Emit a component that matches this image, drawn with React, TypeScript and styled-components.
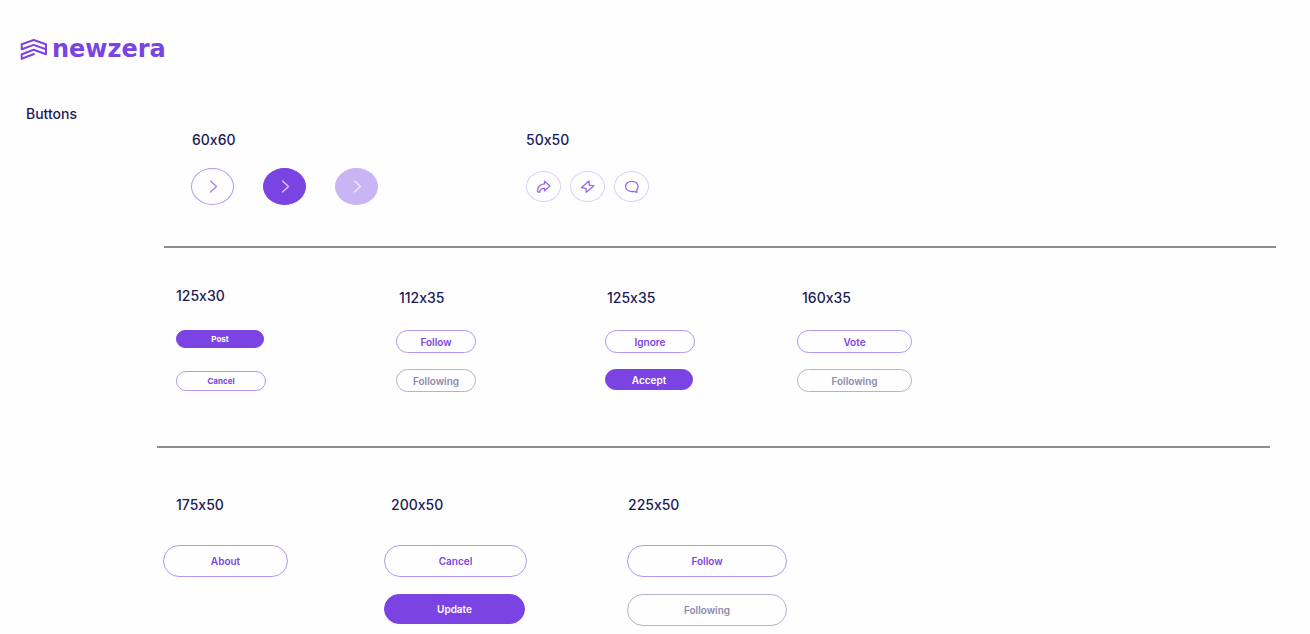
import React from "react";
import styled, { createGlobalStyle, css } from "styled-components";

const color = {
  purple: "#7b44e2",
  outline: "#b497f0",
  pale: "#c9b5f3",
  faint: "#dccffa",
  navy: "#1c1a56",
  mutedText: "#8c8aac",
  mutedLine: "#b5b2cd",
  rule: "#8e8e8e",
};

const GlobalStyle = createGlobalStyle`
  *, *::before, *::after { box-sizing: border-box; }
  body {
    margin: 0;
    background: #fefefe;
    color: ${color.navy};
    font-family: Inter, "Liberation Sans", sans-serif;
    font-feature-settings: "calt" 0;
  }
`;

const Page = styled.main`
  padding-bottom: 8px;
`;

const Header = styled.header`
  display: flex;
  padding: 34px 20px 0;
`;

const Brand = styled.a`
  display: flex;
  align-items: center;
  gap: 4px;
  height: 30px;
  color: ${color.purple};
  text-decoration: none;
`;

const Wordmark = styled.span`
  font-family: "DejaVu Sans", sans-serif;
  font-size: 24px;
  font-weight: 700;
  line-height: 28px;
`;

const Title = styled.h1`
  margin: 40px 26px 0;
  font-size: 14px;
  font-weight: 500;
  line-height: 20px;
`;

const Section = styled.section<{ $top: number; $left: number; $bottom: number }>`
  display: flex;
  align-items: flex-start;
  padding: ${(p) => `${p.$top}px 24px ${p.$bottom}px ${p.$left}px`};
`;

const Group = styled.div<{ $before?: number; $drop?: number }>`
  margin-left: ${(p) => p.$before ?? 0}px;
  padding-top: ${(p) => p.$drop ?? 0}px;
`;

const Label = styled.h2<{ $indent?: number }>`
  margin: 0;
  padding-left: ${(p) => p.$indent ?? 0}px;
  font-size: 14px;
  font-weight: 500;
  line-height: 20px;
`;

const Row = styled.div<{ $gap: number }>`
  display: flex;
  align-items: center;
  gap: ${(p) => p.$gap}px;
  height: 37px;
  margin-top: 18px;
`;

const Stack = styled.div<{ $top: number; $gap: number }>`
  display: flex;
  flex-direction: column;
  align-items: flex-start;
  gap: ${(p) => p.$gap}px;
  margin-top: ${(p) => p.$top}px;
`;

const Rule = styled.hr<{ $left: number; $right: number }>`
  height: 2px;
  margin: 0 ${(p) => p.$right}px 0 ${(p) => p.$left}px;
  border: 0;
  background: ${color.rule};
`;

type Tone = "outline" | "solid" | "muted" | "pale" | "faint";

const tones = {
  outline: css`
    border-color: ${color.outline};
    background: transparent;
    color: ${color.purple};
  `,
  solid: css`
    border-color: ${color.purple};
    background: ${color.purple};
    color: #fff;
  `,
  muted: css`
    border-color: ${color.mutedLine};
    background: transparent;
    color: ${color.mutedText};
  `,
  pale: css`
    border-color: ${color.pale};
    background: ${color.pale};
    color: #fff;
  `,
  faint: css`
    border-color: ${color.faint};
    background: transparent;
    color: #9468ea;
  `,
};

const ButtonBase = styled.button<{ $tone: Tone }>`
  display: flex;
  align-items: center;
  justify-content: center;
  padding: 0;
  border: 1px solid;
  font-family: inherit;
  cursor: pointer;
  ${(p) => tones[p.$tone]}
`;

const Pill = styled(ButtonBase)<{ $w: number; $h: number; $small?: boolean }>`
  width: ${(p) => p.$w}px;
  height: ${(p) => p.$h}px;
  border-radius: 16px;
  font-size: ${(p) => (p.$small ? 8 : 10)}px;
  font-weight: ${(p) => (p.$small ? 700 : 600)};
`;

const Round = styled(ButtonBase)<{ $small?: boolean }>`
  width: ${(p) => (p.$small ? 35 : 43)}px;
  height: ${(p) => (p.$small ? 31 : 37)}px;
  border-radius: 50%;
`;

const LogoMark = () => (
  <svg width="28" height="24" viewBox="0 0 28 24" fill="none" stroke="currentColor" strokeWidth="2" strokeLinejoin="round" strokeLinecap="round" aria-hidden="true">
    <path d="M14 17 1.700 21.800V17.300L13.700 12.800 26 17.300V7.300L13.700 3 1.700 7.300V12.300L13.700 7.900 26 12.300" />
  </svg>
);

const Chevron = ({ tint }: { tint: string }) => (
  <svg width="10" height="14" viewBox="0 0 10 14" fill="none" stroke={tint} strokeWidth="1.3" strokeLinecap="round" strokeLinejoin="round" aria-hidden="true">
    <path d="M2.500 1 8.500 6.500 2.500 12" />
  </svg>
);

const ShareIcon = () => (
  <svg width="16" height="14" viewBox="0 0 16 14" fill="none" stroke="currentColor" strokeWidth="1.3" strokeLinejoin="round" aria-hidden="true">
    <path d="M8.500 1.200 14 6 8.500 10.800V8.300C5.500 8.100 4 9.600 3.600 12.300L1.500 11.600C1.300 7 4.200 4 8.500 3.900Z" />
  </svg>
);

const BoltIcon = () => (
  <svg width="16" height="14" viewBox="0 0 16 14" fill="none" stroke="currentColor" strokeWidth="1.3" strokeLinejoin="round" aria-hidden="true">
    <path d="M9 1 1.500 7.600 6 8.300 6.200 12.300 14 5.800 9.300 5.200Z" />
  </svg>
);

const ChatIcon = () => (
  <svg width="16" height="14" viewBox="0 0 16 14" fill="none" stroke="currentColor" strokeWidth="1.3" strokeLinejoin="round" aria-hidden="true">
    <path d="M13 12.300 9.800 11.300C5.500 12.200 1.600 10 1.600 6.400 1.600 3.500 4.400 1.300 7.800 1.300S14.100 3.500 14.100 6.400C14.100 7.800 13.600 9 12.700 9.900Z" />
  </svg>
);

export default function App() {
  return (
    <>
      <GlobalStyle />
      <Page>
        <Header>
          <Brand href="#">
            <LogoMark />
            <Wordmark>newzera</Wordmark>
          </Brand>
        </Header>
        <Title>Buttons</Title>

        <Section $top={6} $left={191} $bottom={41}>
          <Group>
            <Label $indent={1}>60x60</Label>
            <Row $gap={29}>
              <Round $tone="outline" aria-label="Next"><Chevron tint="#a57fee" /></Round>
              <Round $tone="solid" aria-label="Next, active"><Chevron tint="#d9caf8" /></Round>
              <Round $tone="pale" aria-label="Next, inactive"><Chevron tint="#efe8fc" /></Round>
            </Row>
          </Group>
          <Group $before={148}>
            <Label>50x50</Label>
            <Row $gap={9}>
              <Round $small $tone="faint" aria-label="Share"><ShareIcon /></Round>
              <Round $small $tone="faint" aria-label="Boost"><BoltIcon /></Round>
              <Round $small $tone="faint" aria-label="Comment"><ChatIcon /></Round>
            </Row>
          </Group>
        </Section>

        <Rule $left={164} $right={34} />

        <Section $top={38} $left={176} $bottom={54}>
          <Group>
            <Label>125x30</Label>
            <Stack $top={24} $gap={23}>
              <Pill $tone="solid" $w={88} $h={18} $small>Post</Pill>
              <Pill $tone="outline" $w={90} $h={20} $small>Cancel</Pill>
            </Stack>
          </Group>
          <Group $before={130} $drop={2}>
            <Label $indent={3}>112x35</Label>
            <Stack $top={22} $gap={16}>
              <Pill $tone="outline" $w={80} $h={23}>Follow</Pill>
              <Pill $tone="muted" $w={80} $h={23}>Following</Pill>
            </Stack>
          </Group>
          <Group $before={129} $drop={2}>
            <Label $indent={2}>125x35</Label>
            <Stack $top={22} $gap={16}>
              <Pill $tone="outline" $w={90} $h={23}>Ignore</Pill>
              <Pill $tone="solid" $w={88} $h={21}>Accept</Pill>
            </Stack>
          </Group>
          <Group $before={102} $drop={2}>
            <Label $indent={5}>160x35</Label>
            <Stack $top={22} $gap={16}>
              <Pill $tone="outline" $w={115} $h={23}>Vote</Pill>
              <Pill $tone="muted" $w={115} $h={23}>Following</Pill>
            </Stack>
          </Group>
        </Section>

        <Rule $left={157} $right={40} />

        <Section $top={47} $left={163} $bottom={0}>
          <Group>
            <Label $indent={13}>175x50</Label>
            <Stack $top={30} $gap={17}>
              <Pill $tone="outline" $w={125} $h={32}>About</Pill>
            </Stack>
          </Group>
          <Group $before={96}>
            <Label $indent={7}>200x50</Label>
            <Stack $top={30} $gap={17}>
              <Pill $tone="outline" $w={143} $h={32}>Cancel</Pill>
              <Pill $tone="solid" $w={141} $h={30}>Update</Pill>
            </Stack>
          </Group>
          <Group $before={100}>
            <Label $indent={1}>225x50</Label>
            <Stack $top={30} $gap={17}>
              <Pill $tone="outline" $w={160} $h={32}>Follow</Pill>
              <Pill $tone="muted" $w={160} $h={32}>Following</Pill>
            </Stack>
          </Group>
        </Section>
      </Page>
    </>
  );
}
